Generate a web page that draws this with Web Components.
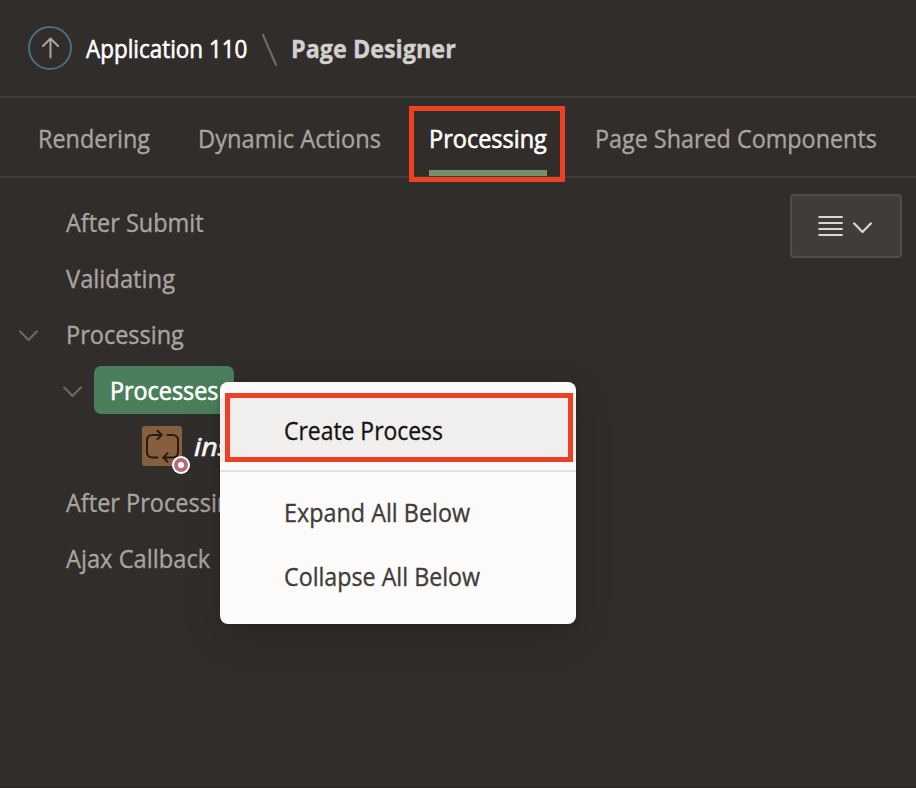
<!DOCTYPE html>
<html lang="en">
<head>
<meta charset="utf-8">
<title>Page Designer</title>
<style>
html,body{margin:0;height:100%;background:#312d2a}
body{overflow:hidden;font-family:"Open Sans","Noto Sans",sans-serif;font-size:25.5px;color:#a8a5a2;-webkit-text-stroke:.35px currentColor}
</style>
</head>
<body>
<page-designer></page-designer>
<script>
// Registers an element whose shadow root is cloned from the given markup.
function define(name, markup, setup) {
  const template = document.createElement('template');
  template.innerHTML = markup;
  customElements.define(name, class extends HTMLElement {
    connectedCallback() {
      if (this.shadowRoot) return;
      this.attachShadow({ mode: 'open' }).appendChild(template.content.cloneNode(true));
      if (setup) setup(this, this.shadowRoot);
    }
  });
}

// A label condensed horizontally to the advance width in its "width" attribute.
define('fit-label', `
<style>
:host{display:block;flex:none;white-space:nowrap;line-height:34px;height:34px}
span{display:inline-block;transform-origin:0 50%}
</style><span><slot></slot></span>`, (host, root) => {
  const span = root.querySelector('span');
  const width = Number(host.getAttribute('width'));
  host.style.width = width + 'px';
  span.style.transform = `scaleX(${width / span.offsetWidth})`;
});

define('chevron-icon', `
<style>:host{display:block;width:20px;height:12px}svg{display:block}</style>
<svg width="20" height="12" viewBox="0 0 20 12" fill="none" stroke="currentColor" stroke-width="2.2" stroke-linecap="round" stroke-linejoin="round"><path d="M1.2 1.4 9.5 9.9 17.8 1.4"/></svg>`);

define('app-header', `
<style>
:host{display:flex;align-items:center;height:96px;border-bottom:2px solid #3f3b38;padding-left:28px;box-sizing:content-box}
svg{display:block;flex:none}
.app{color:#fff;margin-left:14px;-webkit-text-stroke:.6px currentColor}
.sep{margin:3px 14px 0 13px}
.page{color:#d3d1cf;font-weight:700}
</style>
<svg width="44" height="44" viewBox="0 0 44 44" fill="none"><circle cx="22" cy="22" r="21" stroke="#487080" stroke-width="2"/><path d="M22.500 31.500V13M15 20l7.500-7.500L30 20" stroke="#aaa7a4" stroke-width="2" stroke-linecap="round" stroke-linejoin="round"/></svg>
<fit-label class="app" width="161">Application 110</fit-label>
<svg class="sep" width="17" height="34" viewBox="0 0 17 34"><path d="M3 2 16 32" stroke="#6e6a67" stroke-width="2.2" stroke-linecap="round"/></svg>
<fit-label class="page" width="165">Page Designer</fit-label>`);

define('tab-item', `
<style>
:host{display:flex;position:relative;align-items:center;height:78px;padding-top:2px;box-sizing:border-box}
:host([current]){color:#fff;-webkit-text-stroke:.6px currentColor;box-shadow:inset 0 -6px #759168}
:host([current])::after{content:"";position:absolute;left:-20px;right:-18px;top:8px;height:66px;border:5px solid #ed4024}
</style><slot></slot>`);

define('tab-bar', `
<style>:host{display:flex;gap:48px;padding-left:38px;height:78px;border-bottom:2px solid #3f3b38}</style>
<slot></slot>`);

define('tree-row', `
<style>
:host{display:flex;align-items:center;height:56px;padding-left:66px;box-sizing:border-box}
:host([open]){padding-left:19px}
:host([selected]){padding-left:63px}
:host([leaf]){padding-left:142px;color:#fff;font-style:italic;-webkit-text-stroke:.6px currentColor}
chevron-icon{display:none;color:#6c6865;margin:3px 27px 0 0}
:host([open]) chevron-icon{display:block}
:host([selected]) chevron-icon{margin-right:11px}
.pill{display:flex;align-items:center}
:host([selected]) .pill{height:48px;padding:0 16px;border-radius:7px;background:#4b7f5b;color:#fff;-webkit-text-stroke:.6px currentColor}
:host([leaf]) .pill{gap:12px}
</style><chevron-icon></chevron-icon><div class="pill"><slot></slot></div>`);

define('process-icon', `
<style>
:host{display:block;position:relative;width:40px;height:40px;border-radius:3px;background:#865f3f}
svg{display:block}
i{position:absolute;left:30px;top:30px;width:6px;height:6px;border-radius:50%;background:#fff;border:4px solid #b46c7d;box-shadow:0 0 0 2px #fff;margin:2px}
</style>
<svg width="40" height="40" viewBox="0 0 40 40" fill="none" stroke="#281c12" stroke-width="2" stroke-linecap="round" stroke-linejoin="round"><path d="M15.5 31.5H10.5Q5 31.5 5 26V14.500Q5 9 10.500 9H19.500M15.500 4.800 19.700 9 15.500 13.200M25.500 9H30.500Q36 9 36 14.500V26Q36 31.500 30.500 31.500H21.500M25.500 27.300 21.300 31.500 25.500 35.700"/></svg><i></i>`);

define('view-button', `
<style>
:host{display:flex;align-items:center;gap:9px;width:112px;height:64px;box-sizing:border-box;padding-left:26px;border:2px solid #504c49;border-radius:4px;background:#403c37;color:#dad8d6}
svg{display:block}
chevron-icon{margin-top:3px}
</style>
<svg width="26" height="22" viewBox="0 0 26 22" stroke="currentColor" stroke-width="2" stroke-linecap="round"><path d="M1.200 2H24M1.200 8H24M1.200 14H24M1.200 20H24"/></svg>
<chevron-icon></chevron-icon>`);

define('menu-item', `
<style>
:host{display:flex;position:relative;align-items:center;height:64px;padding-left:64px;color:#403c3a}
:host([active]){background:#f0efed;color:#161513}
:host([active])::after{content:"";position:absolute;left:5px;right:3px;top:-5px;height:59px;border:5px solid #ed4024}
</style><slot></slot>`);

define('context-menu', `
<style>
:host{position:absolute;left:220px;top:382px;width:356px;height:242px;box-sizing:border-box;padding:16px 0;border-radius:8px;background:#fcfbfa;box-shadow:0 12px 44px -6px rgba(0,0,0,.22),0 2px 6px rgba(0,0,0,.12)}
hr{margin:8px 0;border:0;height:2px;background:#e3e2df}
</style>
<menu-item active><fit-label width="159">Create Process</fit-label></menu-item>
<hr>
<menu-item><fit-label width="186">Expand All Below</fit-label></menu-item>
<menu-item><fit-label width="196">Collapse All Below</fit-label></menu-item>`);

define('page-designer', `
<style>
:host{display:block;position:relative;width:916px;height:788px;overflow:hidden;box-sizing:border-box;border-bottom:1px solid #2b2225}
main{display:flex;justify-content:space-between;align-items:flex-start;padding:16px 14px 0 0}
</style>
<app-header></app-header>
<tab-bar>
<tab-item><fit-label width="112">Rendering</fit-label></tab-item>
<tab-item><fit-label width="183">Dynamic Actions</fit-label></tab-item>
<tab-item current><fit-label width="118">Processing</fit-label></tab-item>
<tab-item><fit-label width="282">Page Shared Components</fit-label></tab-item>
</tab-bar>
<main>
<section>
<tree-row><fit-label width="138">After Submit</fit-label></tree-row>
<tree-row><fit-label width="109">Validating</fit-label></tree-row>
<tree-row open><fit-label width="118">Processing</fit-label></tree-row>
<tree-row open selected><fit-label width="108">Processes</fit-label></tree-row>
<tree-row leaf><process-icon></process-icon><fit-label width="36">ins</fit-label></tree-row>
<tree-row><fit-label width="178">After Processing</fit-label></tree-row>
<tree-row><fit-label width="144">Ajax Callback</fit-label></tree-row>
</section>
<view-button></view-button>
</main>
<context-menu></context-menu>`);
</script>
</body>
</html>
